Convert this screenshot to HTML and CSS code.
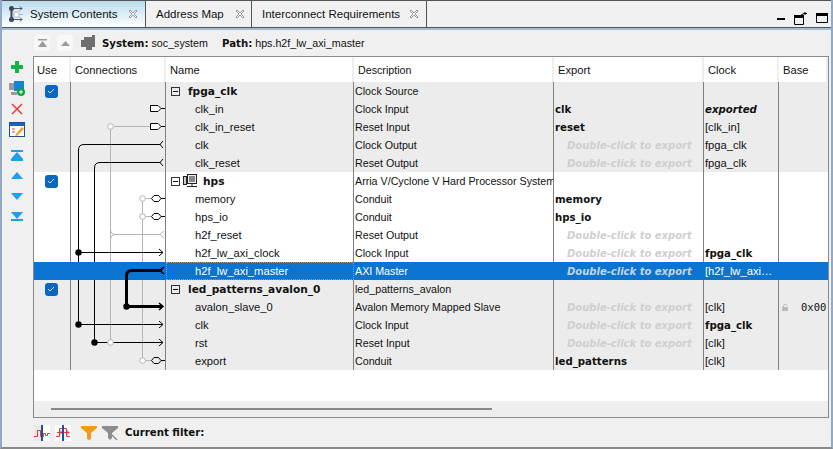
FILE: index.html
```html
<!DOCTYPE html>
<html>
<head>
    <meta charset="utf-8" />
    <title>System Contents</title>
    <link rel="stylesheet" href="styles.css">
</head>
<body>
<div class="window">
    <div class="tabbar">
        <div class="tab tab-active">
            <svg class="tab-icon" width="17" height="16" viewBox="0 0 17 16"><path d="M3.500 3V13" stroke="#3a4658" stroke-width="2" fill="none"/><path d="M3 2.500H14M12 .5L14 2.500L12 4.500M3 13.500H14M12 11.500L14 13.500L12 15.500" stroke="#4a5668" fill="none"/><path d="M4 8.500H15" stroke="#a9b4c0" fill="none"/><rect x="6" y="6" width="5" height="5" fill="#fff" stroke="#b4bcc6"/><circle cx="3.500" cy="2.500" r="2.500" fill="#3a4658"/><circle cx="3.500" cy="13.500" r="2.500" fill="#3a4658"/></svg>
            <span class="tab-label">System Contents</span>
            <svg class="tab-close" width="12" height="12" viewBox="0 0 12 12"><path d="M2 3L3 2L6 5L9 2L10 3L7 6L10 9L9 10L6 7L3 10L2 9L5 6Z" fill="#fff" stroke="#999"/></svg>
        </div>
        <div class="tab tab-map">
            <span class="tab-label">Address Map</span>
            <svg class="tab-close" width="12" height="12" viewBox="0 0 12 12"><path d="M2 3L3 2L6 5L9 2L10 3L7 6L10 9L9 10L6 7L3 10L2 9L5 6Z" fill="#fff" stroke="#999"/></svg>
        </div>
        <div class="tab tab-req">
            <span class="tab-label">Interconnect Requirements</span>
            <svg class="tab-close" width="12" height="12" viewBox="0 0 12 12"><path d="M2 3L3 2L6 5L9 2L10 3L7 6L10 9L9 10L6 7L3 10L2 9L5 6Z" fill="#fff" stroke="#999"/></svg>
        </div>
        <div class="win-btns">
            <svg width="8" height="3" viewBox="0 0 8 3"><rect width="8" height="2" y="1" fill="#000"/></svg>
            <svg width="14" height="13" viewBox="0 0 14 13"><path d="M.5 4.500H9.500V12.500H.5Z" fill="none" stroke="#000"/><rect y="3" width="10" height="3"/><path d="M7 3L11 1M11 0V3M9.500 1.500H13" stroke="#000" fill="none"/></svg>
            <svg width="12" height="10" viewBox="0 0 12 10"><path d="M.5 .5H11.500V9.500H.5Z" fill="none" stroke="#000"/><rect width="12" height="3"/></svg>
        </div>
    </div>

    <div class="pathbar">
        <span class="path-btn"><svg width="9" height="8" viewBox="0 0 9 8"><path d="M0 0H9V1.500H0ZM4.500 2L9 8H0Z" fill="#9a9a9a"/></svg></span>
        <span class="path-btn"><svg width="9" height="5" viewBox="0 0 9 5"><path d="M4.500 0L9 5H0Z" fill="#9a9a9a"/></svg></span>
        <svg class="path-chip" width="16" height="16" viewBox="0 0 16 16"><path d="M1 5H4V2H12V0H15V12H12V15H6V12H1Z" fill="#6f6f6f"/></svg>
        <b>System:</b><span class="path-val">soc_system</span>
        <b>Path:</b><span>hps.h2f_lw_axi_master</span>
    </div>

    <div class="main">
        <div class="sidebar">
            <span class="tool"><svg width="14" height="14" viewBox="0 0 14 14"><path d="M5 1H9V5H13V9H9V13H5V9H1V5H5Z" fill="#12b34a"/></svg></span>
            <span class="tool"><svg width="16" height="16" viewBox="0 0 16 16"><rect x="0" y="3" width="7" height="7" fill="#9a9a9a"/><rect x="2" y="12" width="6" height="3" fill="#9a9a9a"/><rect x="5" y="1" width="10" height="10" fill="#1583d8"/><circle cx="12" cy="12" r="4" fill="#12a04a"/><path d="M10 12H14M12 10V14" stroke="#fff"/></svg></span>
            <span class="tool"><svg width="14" height="14" viewBox="0 0 14 14"><path d="M2 2L12 12M12 2L2 12" stroke="#e83a3a" stroke-width="1.500"/></svg></span>
            <span class="tool"><svg width="16" height="15" viewBox="0 0 16 15"><rect x=".5" y=".5" width="15" height="14" fill="#fff" stroke="#1f4f96"/><rect x="1" y="1" width="14" height="3" fill="#1f62b4"/><path d="M3 7H6M3 10H6" stroke="#d94a2a"/><path d="M6 13L13 5L15 7L8 14Z" fill="#f2a12e"/></svg></span>
            <span class="tool arrow gap-top"><svg width="12" height="11" viewBox="0 0 12 11"><path d="M0 0H12V2H0ZM6 2L12 9H0ZM0 9H12V11H0Z" fill="#1aa0ef"/></svg></span>
            <span class="tool arrow"><svg width="12" height="7" viewBox="0 0 12 7"><path d="M6 0L12 7H0Z" fill="#1aa0ef"/></svg></span>
            <span class="tool arrow"><svg width="12" height="7" viewBox="0 0 12 7"><path d="M0 0H12L6 7Z" fill="#1aa0ef"/></svg></span>
            <span class="tool arrow"><svg width="12" height="10" viewBox="0 0 12 10"><path d="M0 0H12L6 7H12V9H0V7H6Z" fill="#1aa0ef"/></svg></span>
        </div>

        <div class="table">
            <div class="row head">
                <div class="c c-use">Use</div>
                <div class="c c-conn">Connections</div>
                <div class="c c-name">Name</div>
                <div class="c c-desc">Description</div>
                <div class="c c-exp">Export</div>
                <div class="c c-clk">Clock</div>
                <div class="c c-base">Base</div>
            </div>
            <div class="rows">
                <div class="row grey">
                    <div class="c c-use"><span class="check"><svg width="8" height="6" viewBox="0 0 8 6"><path d="M1 3L3 5L7 1" stroke="#cfe2f7" fill="none"/></svg></span></div>
                    <div class="c c-conn"></div>
                    <div class="c c-name"><span class="tree"></span><b class="mod">fpga_clk</b></div>
                    <div class="c c-desc">Clock Source</div><div class="c c-exp"></div><div class="c c-clk"></div><div class="c c-base"></div>
                </div>
                <div class="row grey">
                    <div class="c c-use"></div><div class="c c-conn"></div>
                    <div class="c c-name sub">clk_in</div><div class="c c-desc">Clock Input</div>
                    <div class="c c-exp"><b>clk</b></div><div class="c c-clk"><b><i>exported</i></b></div><div class="c c-base"></div>
                </div>
                <div class="row grey">
                    <div class="c c-use"></div><div class="c c-conn"></div>
                    <div class="c c-name sub">clk_in_reset</div><div class="c c-desc">Reset Input</div>
                    <div class="c c-exp"><b>reset</b></div><div class="c c-clk">[clk_in]</div><div class="c c-base"></div>
                </div>
                <div class="row grey">
                    <div class="c c-use"></div><div class="c c-conn"></div>
                    <div class="c c-name sub">clk</div><div class="c c-desc">Clock Output</div>
                    <div class="c c-exp"><span class="hint">Double-click to export</span></div><div class="c c-clk">fpga_clk</div><div class="c c-base"></div>
                </div>
                <div class="row grey">
                    <div class="c c-use"></div><div class="c c-conn"></div>
                    <div class="c c-name sub">clk_reset</div><div class="c c-desc">Reset Output</div>
                    <div class="c c-exp"><span class="hint">Double-click to export</span></div><div class="c c-clk">fpga_clk</div><div class="c c-base"></div>
                </div>

                <div class="row">
                    <div class="c c-use"><span class="check"><svg width="8" height="6" viewBox="0 0 8 6"><path d="M1 3L3 5L7 1" stroke="#cfe2f7" fill="none"/></svg></span></div>
                    <div class="c c-conn"></div>
                    <div class="c c-name"><span class="tree tree-icon"></span>
                        <svg class="cpu" width="15" height="14" viewBox="0 0 15 14"><rect x="4.500" y=".5" width="9" height="9" fill="#eee" stroke="#222"/><rect x="6" y="2" width="6" height="6" fill="#888"/><rect x=".5" y="2.500" width="3" height="8" fill="#ccc" stroke="#222"/><path d="M4 12.500H14M9 10V12" stroke="#222"/></svg>
                        <b class="mod">hps</b></div>
                    <div class="c c-desc">Arria V/Cyclone V Hard Processor System</div><div class="c c-exp"></div><div class="c c-clk"></div><div class="c c-base"></div>
                </div>
                <div class="row">
                    <div class="c c-use"></div><div class="c c-conn"></div>
                    <div class="c c-name sub">memory</div><div class="c c-desc">Conduit</div>
                    <div class="c c-exp"><b>memory</b></div><div class="c c-clk"></div><div class="c c-base"></div>
                </div>
                <div class="row">
                    <div class="c c-use"></div><div class="c c-conn"></div>
                    <div class="c c-name sub">hps_io</div><div class="c c-desc">Conduit</div>
                    <div class="c c-exp"><b>hps_io</b></div><div class="c c-clk"></div><div class="c c-base"></div>
                </div>
                <div class="row">
                    <div class="c c-use"></div><div class="c c-conn"></div>
                    <div class="c c-name sub">h2f_reset</div><div class="c c-desc">Reset Output</div>
                    <div class="c c-exp"><span class="hint">Double-click to export</span></div><div class="c c-clk"></div><div class="c c-base"></div>
                </div>
                <div class="row">
                    <div class="c c-use"></div><div class="c c-conn"></div>
                    <div class="c c-name sub">h2f_lw_axi_clock</div><div class="c c-desc">Clock Input</div>
                    <div class="c c-exp"><span class="hint">Double-click to export</span></div><div class="c c-clk"><b>fpga_clk</b></div><div class="c c-base"></div>
                </div>
                <div class="row selected">
                    <div class="c c-use"></div><div class="c c-conn"></div>
                    <div class="c c-name sub focus">h2f_lw_axi_master</div><div class="c c-desc">AXI Master</div>
                    <div class="c c-exp"><span class="hint">Double-click to export</span></div><div class="c c-clk">[h2f_lw_axi…</div><div class="c c-base"></div>
                </div>

                <div class="row grey">
                    <div class="c c-use"><span class="check"><svg width="8" height="6" viewBox="0 0 8 6"><path d="M1 3L3 5L7 1" stroke="#cfe2f7" fill="none"/></svg></span></div>
                    <div class="c c-conn"></div>
                    <div class="c c-name"><span class="tree"></span><b class="mod">led_patterns_avalon_0</b></div>
                    <div class="c c-desc">led_patterns_avalon</div><div class="c c-exp"></div><div class="c c-clk"></div><div class="c c-base"></div>
                </div>
                <div class="row grey">
                    <div class="c c-use"></div><div class="c c-conn"></div>
                    <div class="c c-name sub">avalon_slave_0</div><div class="c c-desc">Avalon Memory Mapped Slave</div>
                    <div class="c c-exp"><span class="hint">Double-click to export</span></div><div class="c c-clk">[clk]</div>
                    <div class="c c-base base-val"><svg width="7" height="7" viewBox="0 0 7 7"><rect y="3" width="6" height="4" fill="#bbb"/><path d="M1.500 3V1.500Q1.500 .5 3 .5T5.500 1.500" stroke="#bbb" fill="none"/></svg><span>0x00</span></div>
                </div>
                <div class="row grey">
                    <div class="c c-use"></div><div class="c c-conn"></div>
                    <div class="c c-name sub">clk</div><div class="c c-desc">Clock Input</div>
                    <div class="c c-exp"><span class="hint">Double-click to export</span></div><div class="c c-clk"><b>fpga_clk</b></div><div class="c c-base"></div>
                </div>
                <div class="row grey">
                    <div class="c c-use"></div><div class="c c-conn"></div>
                    <div class="c c-name sub">rst</div><div class="c c-desc">Reset Input</div>
                    <div class="c c-exp"><span class="hint">Double-click to export</span></div><div class="c c-clk">[clk]</div><div class="c c-base"></div>
                </div>
                <div class="row grey">
                    <div class="c c-use"></div><div class="c c-conn"></div>
                    <div class="c c-name sub">export</div><div class="c c-desc">Conduit</div>
                    <div class="c c-exp"><b>led_patterns</b></div><div class="c c-clk">[clk]</div><div class="c c-base"></div>
                </div>

                <!-- wires, drawn in page coords shifted by the column origin (71,82) -->
                <svg class="wires" width="95" height="288" viewBox="71 82 95 288">
                    <g fill="none" stroke="#b4b4b4">
                        <path d="M110.500 126.500V262M110.500 280V340"/>
                        <path d="M110.500 229Q110.500 234.500 116 234.500H160M110.500 240Q110.500 234.500 116 234.500"/>
                        <path d="M114 126.500H150"/>
                        <path d="M142.500 198.500V262M142.500 280V358"/>
                        <path d="M146 198.500H151M146 216.500H151M146 360.500H151"/>
                        <path d="M164 231L160 234.500L164 238"/>
                    </g>
                    <g fill="none" stroke="#000">
                        <path d="M78.500 262V150Q78.500 144.500 84 144.500H160.500"/>
                        <path d="M78.500 280V324.500"/>
                        <path d="M94.500 262V168Q94.500 162.500 100 162.500H160.500"/>
                        <path d="M94.500 280V342.500"/>
                        <path d="M78.500 252.500H163M78.500 324.500H163M94.500 342.500H163"/>
                        <path d="M163 141L160 144.500L163 148M163 159L160 162.500L163 166"/>
                        <path d="M159 249L163 252.500L159 256M159 321L163 324.500L159 328M159 339L163 342.500L159 346"/>
                        <path d="M150.500 105.500H158L161 108.500L158 111.500H150.500ZM161 108.500H165" fill="#fff"/>
                        <path d="M150.500 123.500H158L161 126.500L158 129.500H150.500ZM161 126.500H165" fill="#fff"/>
                        <path d="M151.500 198.500L154 195.500H158.500L161 198.500L158.500 201.500H154ZM161 198.500H165"/>
                        <path d="M151.500 216.500L154 213.500H158.500L161 216.500L158.500 219.500H154ZM161 216.500H165"/>
                        <path d="M151.500 360.500L154 357.500H158.500L161 360.500L158.500 363.500H154ZM161 360.500H165"/>
                    </g>
                    <g fill="#fff" stroke="#b4b4b4">
                        <circle cx="110.500" cy="126.500" r="2.800"/>
                        <circle cx="110.500" cy="342.500" r="2.800"/>
                        <circle cx="142.500" cy="198.500" r="2.800"/>
                        <circle cx="142.500" cy="216.500" r="2.800"/>
                        <circle cx="142.500" cy="360.500" r="2.800"/>
                    </g>
                    <g fill="#000">
                        <circle cx="78.500" cy="252.500" r="3.200"/>
                        <circle cx="78.500" cy="324.500" r="3.200"/>
                        <circle cx="94.500" cy="342.500" r="3.200"/>
                        <circle cx="126.500" cy="306.500" r="3.200"/>
                    </g>
                    <path d="M162 270.500H132Q126.500 270.500 126.500 276V306.500H162" fill="none" stroke="#000" stroke-width="3"/>
                    <path d="M164 267L160 270.500L164 274M159 303L163 306.500L159 310" fill="none" stroke="#000" stroke-width="1.500"/>
                </svg>
            </div>
            <div class="blank"></div>
            <div class="hscroll"><div class="hscroll-thumb"></div></div>
        </div>
    </div>

    <div class="filterbar">
        <svg class="fl-wave" width="16" height="16" viewBox="0 0 16 16"><rect width="16" height="16" fill="#e8e8e8"/><rect x="8" width="8" height="16" fill="#fff"/><path d="M0 11.500H3.500V5.500H6.500V11.500H9.500V8.500H11.500V10.500H13.500V8.500H16" stroke="#e5392b" fill="none"/><path d="M8 0V16" stroke="#1d4fa8" stroke-width="2"/></svg>
        <svg class="fl-wave" width="16" height="16" viewBox="0 0 16 16"><rect width="16" height="16" fill="#fff"/><path d="M1 11.500H4.500V3.500H11.500V11.500H15M2 7.500H7M4.500 5L7 7.500L4.500 10M9 7.500H14M11.500 5L14 7.500L11.500 10" stroke="#e5392b" fill="none"/><path d="M8 0V16" stroke="#1d4fa8" stroke-width="2"/></svg>
        <svg class="fl-funnel" width="16" height="14" viewBox="0 0 16 14"><path d="M0 0H16V2L10 7V13L8 14L6 13V7L0 2Z" fill="#f79a17"/></svg>
        <svg width="16" height="14" viewBox="0 0 16 14"><path d="M0 0H16V2L10 7V12L8 14L6 12V7L0 2Z" fill="#8d8d8d"/><path d="M9 8L15 14" stroke="#8d8d8d" stroke-width="1.500"/></svg>
        <b class="fl-label">Current filter:</b>
    </div>
</div>
</body>
</html>
```
FILE: styles.css
```css
html, body {
    margin: 0;
    padding: 0;
    background: #f0f0f0;
}

body {
    font-family: "Liberation Sans", "Noto Sans", sans-serif;
    font-size: 11.200px;
    color: #111;
}

b {
    font-family: "DejaVu Sans", sans-serif;
    font-size: 10.200px;
}

.window {
    width: 833px;
    height: 449px;
    box-sizing: border-box;
    border-left: 2px solid #8fa9c6;
    border-right: 2px solid #8fa9c6;
    border-bottom: 2px solid #8a8a8a;
    display: flex;
    flex-direction: column;
    overflow: hidden;
}

/* tabs */
.tabbar {
    height: 28px;
    box-sizing: border-box;
    border-top: 1px solid #555;
    border-bottom: 1px solid #555;
    display: flex;
    background: #f1f1f1;
    flex: none;
}

.tab {
    display: flex;
    align-items: center;
    border-right: 1px solid #555;
    font-size: 11.500px;
    white-space: nowrap;
    box-sizing: border-box;
}

.tab-active {
    width: 144px;
    padding: 0 6px 0 6px;
    background: linear-gradient(#b9dcee, #ffffff);
}

.tab-map {
    width: 106px;
    padding: 0 5px 0 10px;
}

.tab-req {
    width: 175px;
    padding: 0 6px 0 10px;
}

.tab-icon {
    margin-right: 5px;
}

.tab-label {
    flex: 1;
}

.win-btns {
    margin-left: auto;
    display: flex;
    align-items: center;
    gap: 8px;
    padding: 8px 3px 0 0;
}

.win-btns svg:first-child {
    margin-right: 1px;
}

.pathbar {
    height: 28px;
    flex: none;
    box-sizing: border-box;
    border-top: 2px solid #a3bbd3;
    display: flex;
    align-items: center;
    padding-left: 32px;
    font-size: 10.700px;
}

.path-btn {
    width: 16px;
    height: 16px;
    background: #f8f8f8;
    border-radius: 3px;
    display: flex;
    align-items: center;
    justify-content: center;
    margin-right: 7px;
}

.path-chip {
    margin-right: 6px;
}

.path-val {
    margin: 0 14px 0 3px;
}

.pathbar b + span:last-child {
    margin-left: 3px;
}

.main {
    flex: 1;
    display: flex;
    min-height: 0;
}

.sidebar {
    width: 31px;
    flex: none;
    box-sizing: border-box;
    padding-right: 2px;
    display: flex;
    flex-direction: column;
    align-items: center;
}

.tool {
    height: 21px;
    display: flex;
    align-items: center;
    flex: none;
}

.tool.arrow {
    height: 20.500px;
}

.gap-top {
    margin-top: 5px;
}

/* table */
.table {
    width: 796px;
    height: 362px;
    box-sizing: border-box;
    border: 1px solid #8a8a8a;
    background: #fff;
    display: flex;
    flex-direction: column;
}

.rows {
    position: relative;
}

.row {
    display: flex;
    height: 18px;
    background: #fff;
}

.row.grey {
    background: #ececec;
}

.row.head {
    height: 25px;
    background: #fff;
}

.c {
    box-sizing: border-box;
    border-right: 1px solid #7f7f7f;
    display: flex;
    align-items: center;
    white-space: nowrap;
    overflow: hidden;
    padding-left: 1px;
}

.head .c {
    border-right: 2px solid #eeeeee;
    padding-left: 4px;
}

.c-use { width: 37px; justify-content: center; padding: 0 2px 0 0; }
.c-conn { width: 95px; }
.c-name { width: 188px; padding-left: 5px; }
.c-desc { width: 200px; font-size: 10.700px; }
.c-exp { width: 150px; }
.c-clk { width: 75px; }
.c-base { flex: 1; border-right: 0; }

.head .c-use {
    justify-content: flex-start;
    padding-left: 3px;
}

.sub {
    padding-left: 29px;
}

.check {
    width: 13px;
    height: 13px;
    background: #0b66c2;
    border-radius: 3px;
    display: flex;
    align-items: center;
    justify-content: center;
}

.tree {
    width: 9px;
    height: 9px;
    box-sizing: border-box;
    border: 1px solid #333;
    position: relative;
    margin-right: 8px;
    flex: none;
}

.tree::after {
    content: "";
    position: absolute;
    left: 1px;
    right: 1px;
    top: 3px;
    height: 1px;
    background: #111;
}

.tree-icon {
    margin-right: 3px;
}

.cpu {
    margin-right: 5px;
}

.mod {
    font-size: 10.600px;
}

.hint {
    font-family: "DejaVu Sans", sans-serif;
    font-weight: bold;
    font-style: italic;
    font-size: 10px;
    color: #cfcfcf;
    padding-left: 12px;
}

.base-val {
    padding-left: 3px;
    gap: 12px;
    font-family: "DejaVu Sans Mono", monospace;
    font-size: 10.500px;
    justify-content: flex-start;
}

/* selected row paints over the col lines */
.row.selected {
    background: #0a74d0;
    color: #fff;
}

.row.selected .c {
    border-right-color: #0a74d0;
}

.row.selected .hint {
    color: #c4d4e4;
}

.focus {
    outline: 1px dotted #f08a1c;
    outline-offset: -1px;
}

.wires {
    position: absolute;
    left: 37px;
    top: 0;
}

.blank {
    height: 31px;
    background: #fff;
}

.hscroll {
    flex: 1;
    background: #eeeeee;
    padding: 7px 0 0 17px;
}

.hscroll-thumb {
    width: 441px;
    height: 2px;
    background: #888;
}

.filterbar {
    height: 29px;
    flex: none;
    display: flex;
    align-items: center;
    padding-left: 32px;
    gap: 5px;
}

.fl-funnel {
    margin-left: 5px;
}

.fl-label {
    margin-left: 2px;
}
```
